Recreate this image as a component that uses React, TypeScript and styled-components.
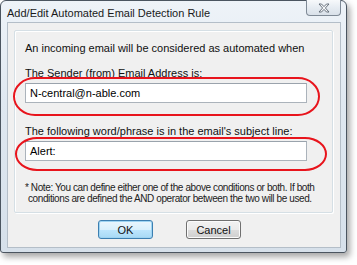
import React from "react";
import styled, { createGlobalStyle } from "styled-components";

const GlobalStyle = createGlobalStyle`
  html, body {
    margin: 0;
    padding: 0;
    background: #ffffff;
  }
  body {
    font-family: "Liberation Sans", Arial, sans-serif;
  }
`;

const Page = styled.div`
  width: 357px;
  height: 265px;
  overflow: hidden;
`;

const Window = styled.div`
  width: 345px;
  height: 251px;
  border: 1px solid #4b5560;
  border-radius: 6px 6px 3px 3px;
  background: linear-gradient(180deg, #eef3f8 0%, #dfe8f1 40%, #d6e0ea 100%);
  box-shadow: 3px 4px 6px rgba(0, 0, 0, 0.35);
  display: flex;
  flex-direction: column;
`;

const TitleBar = styled.div`
  height: 21px;
  display: flex;
  align-items: flex-start;
  padding-left: 6px;
`;

const Title = styled.span`
  font-size: 11px;
  line-height: 12px;
  margin-top: 6px;
  color: #1a1a1a;
`;

const CloseButton = styled.div`
  margin-left: auto;
  margin-right: 5px;
  margin-top: -1px;
  width: 33px;
  height: 15px;
  border: 1px solid #7f8a96;
  border-top: none;
  border-radius: 0 0 4px 4px;
  background: linear-gradient(180deg, #f7f9fb 0%, #e6ecf2 50%, #d9e1e9 100%);
  display: flex;
  align-items: center;
  justify-content: center;
`;

const Client = styled.div`
  flex: 1;
  margin: 0 5px 4px 6px;
  border: 1px solid #b4bec8;
  background: #f0f0f0;
  padding: 7px 7px 0 6px;
  display: flex;
  flex-direction: column;
`;

const Group = styled.div`
  height: 183px;
  border: 1px solid #d5dfe5;
  box-shadow: inset 1px 1px 0 #ffffff, 1px 1px 0 #ffffff;
  border-radius: 2px;
  padding: 10px 0 0 10px;
  box-sizing: border-box;
  font-size: 11px;
  color: #111;
`;

const Intro = styled.div`
  line-height: 14px;
  margin-bottom: 11px;
`;

const Field = styled.div`
  position: relative;
  margin-bottom: 21px;
`;

const Label = styled.div`
  line-height: 14px;
  margin-bottom: 3px;
`;

const Input = styled.div`
  width: 282px;
  height: 20px;
  box-sizing: border-box;
  border: 1px solid #abb3bb;
  border-top-color: #9aa3ac;
  background: #ffffff;
  padding: 0 4px;
  font-size: 11px;
  line-height: 18px;
  color: #000;
`;

const Highlight = styled.div<{ $left: number; $top: number; $w: number; $h: number }>`
  position: absolute;
  left: ${(p) => p.$left}px;
  top: ${(p) => p.$top}px;
  width: ${(p) => p.$w}px;
  height: ${(p) => p.$h}px;
  border: 2px solid #e8141c;
  border-radius: 22px / 50%;
  box-sizing: border-box;
  pointer-events: none;
`;

const Note = styled.div`
  font-size: 10px;
  line-height: 11px;
  letter-spacing: -0.4px;
  white-space: nowrap;
  color: #222;
`;

const NoteLine = styled.div<{ $indent?: boolean }>`
  padding-left: ${(p) => (p.$indent ? "3px" : "0")};
`;

const Buttons = styled.div`
  display: flex;
  justify-content: center;
  gap: 33px;
  margin-top: 7px;
  padding-right: 8px;
`;

const Button = styled.div<{ $primary?: boolean }>`
  width: 53px;
  height: 17px;
  border: 1px solid ${(p) => (p.$primary ? "#3c7fb1" : "#707070")};
  border-radius: 3px;
  box-shadow: inset 0 0 0 1px ${(p) => (p.$primary ? "#9fd4f2" : "#fbfbfb")};
  background: ${(p) =>
    p.$primary
      ? "linear-gradient(180deg, #eaf6fd 0%, #d9f0fc 50%, #bee6fd 51%, #a7d9f5 100%)"
      : "linear-gradient(180deg, #f2f2f2 0%, #ebebeb 50%, #dddddd 51%, #cfcfcf 100%)"};
  display: flex;
  align-items: center;
  justify-content: center;
  font-size: 11px;
  color: #111;
`;

function CloseGlyph() {
  return (
    <svg width="12" height="10" viewBox="0 0 12 10">
      <path
        d="M1 1 H3.5 L6 3.6 L8.5 1 H11 L7.4 5 L11 9 H8.5 L6 6.4 L3.5 9 H1 L4.6 5 Z"
        fill="#f4f6f8"
        stroke="#5a6470"
        strokeWidth="0.9"
        strokeLinejoin="round"
      />
    </svg>
  );
}

export default function App() {
  return (
    <Page>
      <GlobalStyle />
      <Window>
        <TitleBar>
          <Title>Add/Edit Automated Email Detection Rule</Title>
          <CloseButton>
            <CloseGlyph />
          </CloseButton>
        </TitleBar>
        <Client>
          <Group>
            <Intro>An incoming email will be considered as automated when</Intro>
            <Field>
              <Label>The Sender (from) Email Address is:</Label>
              <Input>N-central@n-able.com</Input>
              <Highlight $left={-12} $top={11} $w={307} $h={39} />
            </Field>
            <Field>
              <Label>The following word/phrase is in the email's subject line:</Label>
              <Input>Alert:</Input>
              <Highlight $left={-10} $top={13} $w={312} $h={34} />
            </Field>
            <Note>
              <NoteLine>* Note: You can define either one of the above conditions or both. If both</NoteLine>
              <NoteLine $indent>conditions are defined the AND operator between the two will be used.</NoteLine>
            </Note>
          </Group>
          <Buttons>
            <Button $primary>OK</Button>
            <Button>Cancel</Button>
          </Buttons>
        </Client>
      </Window>
    </Page>
  );
}
